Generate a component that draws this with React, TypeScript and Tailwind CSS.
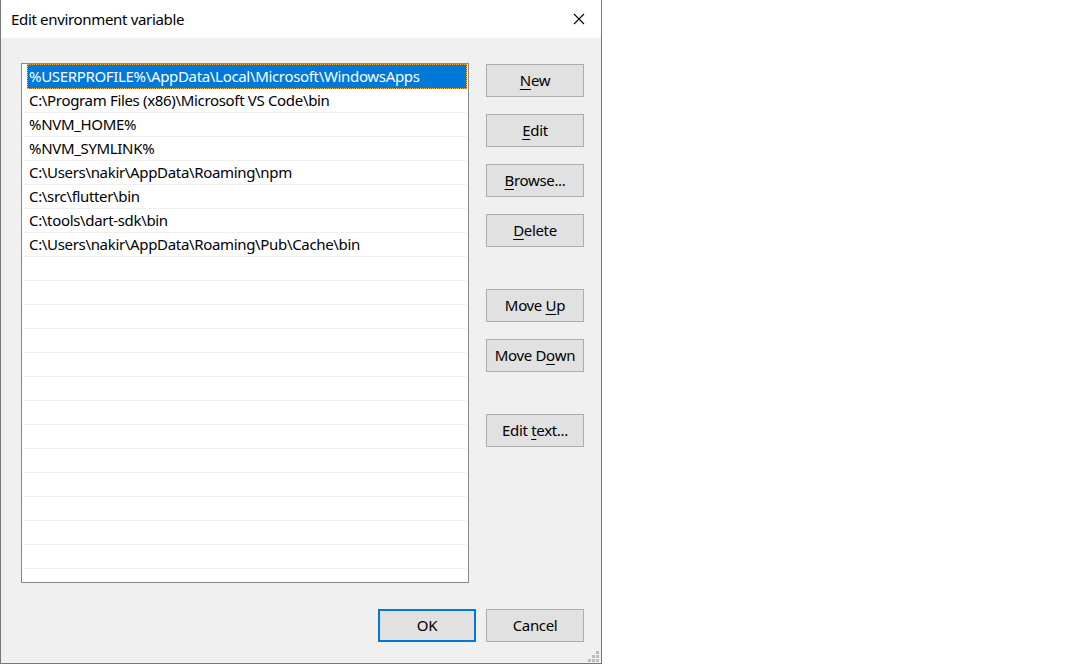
import type { ReactNode } from 'react';

const paths = [
  '%USERPROFILE%\\AppData\\Local\\Microsoft\\WindowsApps',
  'C:\\Program Files (x86)\\Microsoft VS Code\\bin',
  '%NVM_HOME%',
  '%NVM_SYMLINK%',
  'C:\\Users\\nakir\\AppData\\Roaming\\npm',
  'C:\\src\\flutter\\bin',
  'C:\\tools\\dart-sdk\\bin',
  'C:\\Users\\nakir\\AppData\\Roaming\\Pub\\Cache\\bin',
];

const font = "font-['Noto_Sans','Liberation_Sans',sans-serif] tracking-[-0.33px]";

function DlgButton({ children, primary }: { children: ReactNode; primary?: boolean }) {
  return (
    <button
      type="button"
      className={
        'flex h-[33px] w-[98px] shrink-0 items-center justify-center bg-[#e1e1e1] text-[15px] leading-none text-black ' +
        (primary ? 'border-2 border-[#0078d7]' : 'border border-[#adadad]')
      }
    >
      {children}
    </button>
  );
}

function Key({ children }: { children: ReactNode }) {
  return <span className="underline decoration-1 underline-offset-[3px]">{children}</span>;
}

function PathList() {
  const rows = Array.from({ length: 22 }).map((_, i) => paths[i] ?? '');
  return (
    <div className="h-[520px] w-[448px] shrink-0 overflow-hidden border border-[#828790] bg-white">
      {rows.map((p, i) =>
        i === 0 ? (
          <div key={i} className="ml-[5px] mr-[1px] flex h-[25px] items-center bg-[#0078d7] pl-[2px] text-[15px] text-white outline-1 outline-dotted outline-offset-[-1px] outline-[#f5b042]">
            {p}
          </div>
        ) : (
          <div key={i} className="mx-[1px] flex h-[24px] items-center border-b border-[#f0f0f0] pl-[6px] text-[15px] text-black">
            {p}
          </div>
        ),
      )}
    </div>
  );
}

export default function App() {
  return (
    <div className={`flex h-[664px] w-[1066px] bg-white ${font}`}>
      <div className="relative flex h-[664px] w-[602px] shrink-0 flex-col border-x border-b border-[#777777] bg-[#f0f0f0]">
        <div className="flex h-[38px] shrink-0 items-center justify-between bg-white">
          <span className="pl-[10px] text-[15px] text-black">Edit environment variable</span>
          <div className="flex h-full w-[45px] items-center justify-center">
            <svg width="12" height="12" viewBox="0 0 12 12" aria-hidden>
              <path d="M1 1L11 11M11 1L1 11" stroke="#000" strokeWidth="1.1" />
            </svg>
          </div>
        </div>

        <div className="flex flex-1 flex-col pl-[20px] pr-[17px] pt-[25px]">
          <div className="flex gap-[17px]">
            <PathList />
            <div className="mt-[1px] flex flex-col">
              <DlgButton>
                <Key>N</Key>ew
              </DlgButton>
              <div className="mt-[17px]">
                <DlgButton>
                  <Key>E</Key>dit
                </DlgButton>
              </div>
              <div className="mt-[17px]">
                <DlgButton>
                  <Key>B</Key>rowse...
                </DlgButton>
              </div>
              <div className="mt-[17px]">
                <DlgButton>
                  <Key>D</Key>elete
                </DlgButton>
              </div>
              <div className="mt-[42px]">
                <DlgButton>
                  Move&nbsp;<Key>U</Key>p
                </DlgButton>
              </div>
              <div className="mt-[17px]">
                <DlgButton>
                  Move D<Key>o</Key>wn
                </DlgButton>
              </div>
              <div className="mt-[42px]">
                <DlgButton>
                  Edit&nbsp;<Key>t</Key>ext...
                </DlgButton>
              </div>
            </div>
          </div>

          <div className="mt-[26px] flex justify-end gap-[10px]">
            <DlgButton primary>OK</DlgButton>
            <DlgButton>Cancel</DlgButton>
          </div>
        </div>

        <svg className="absolute bottom-[1px] right-[2px]" width="11" height="11" viewBox="0 0 11 11" aria-hidden>
          <rect x="8" y="0" width="3" height="3" fill="#bdbdbd" />
          <rect x="4" y="4" width="3" height="3" fill="#bdbdbd" />
          <rect x="8" y="4" width="3" height="3" fill="#bdbdbd" />
          <rect x="0" y="8" width="3" height="3" fill="#bdbdbd" />
          <rect x="4" y="8" width="3" height="3" fill="#bdbdbd" />
          <rect x="8" y="8" width="3" height="3" fill="#bdbdbd" />
        </svg>
      </div>
      <div className="flex-1 bg-white" />
    </div>
  );
}
